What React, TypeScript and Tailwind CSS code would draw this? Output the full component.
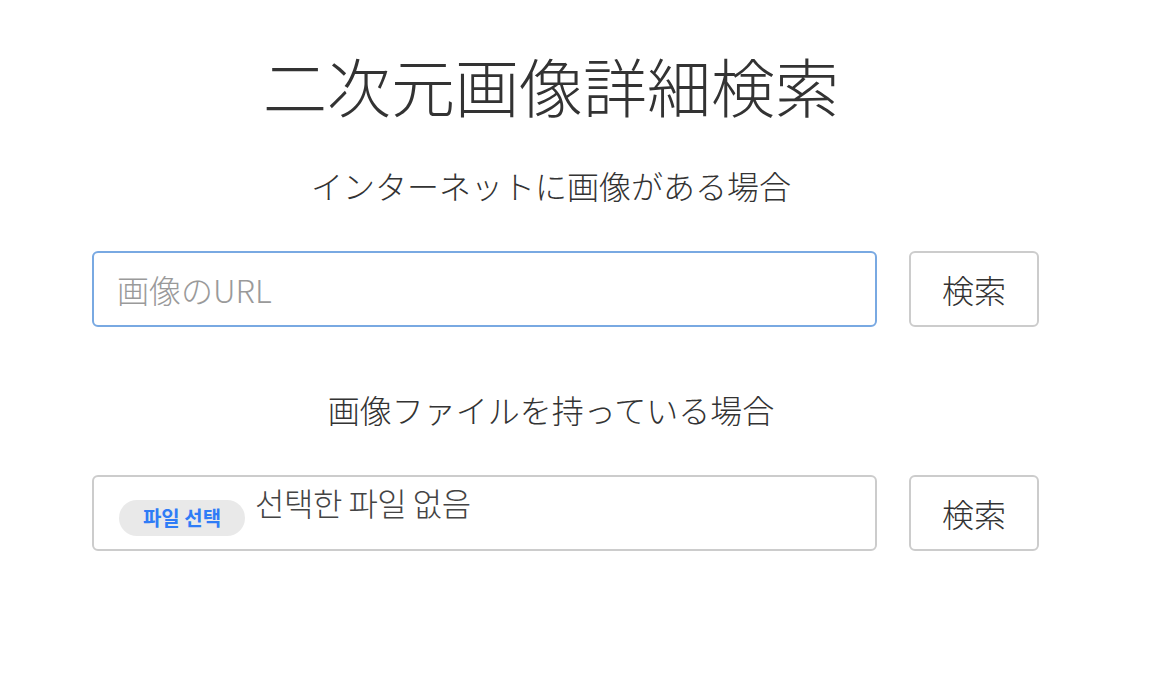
import { useState } from 'react';

const jp = '"Noto Sans CJK JP", "Noto Sans", sans-serif';
const kr = '"Noto Sans CJK KR", "Noto Sans", sans-serif';

export default function App() {
  const [url, setUrl] = useState('');

  return (
    <div className="min-h-screen bg-white text-[#333]" style={{ fontFamily: jp }}>
      <div className="ml-[92px] w-[947px] pt-[46px]">
        {/* Title */}
        <h1 className="w-[918px] text-center text-[64px] leading-[1.2] font-light">二次元画像詳細検索</h1>

        {/* URL search */}
        <h2 className="mt-[42px] w-[918px] text-center text-[32px] leading-10 font-light">
          インターネットに画像がある場合
        </h2>
        <div className="mt-[46px] flex gap-[32px]">
          <input
            type="text"
            value={url}
            onChange={(e) => setUrl(e.target.value)}
            placeholder="画像のURL"
            className="h-[76px] w-[785px] rounded-[6px] border-2 border-[#79a9e2] px-[23px] text-[32px] font-light text-[#333] outline-none placeholder:text-[#9a9a9a]"
          />
          <button className="h-[76px] w-[130px] rounded-[6px] border-2 border-[#cccccc] bg-white text-[32px] font-light text-[#333]">
            検索
          </button>
        </div>

        {/* File search */}
        <h2 className="mt-[62px] w-[918px] text-center text-[32px] leading-10 font-light">
          画像ファイルを持っている場合
        </h2>
        <div className="mt-[46px] flex gap-[32px]">
          <label
            className="flex h-[76px] w-[785px] cursor-pointer items-start rounded-[6px] border-2 border-[#cccccc] pl-[25px]"
            style={{ fontFamily: kr }}
          >
            <span className="mt-[23px] flex h-[36px] w-[126px] items-center justify-center rounded-full bg-[#e9e9e9] text-[20px] font-semibold text-[#2f7cf6]">
              파일 선택
            </span>
            <span className="mt-[5px] ml-[10px] text-[32px] leading-10 font-light tracking-[-0.5px] text-[#444]">
              선택한 파일 없음
            </span>
            <input type="file" className="hidden" />
          </label>
          <button className="h-[76px] w-[130px] rounded-[6px] border-2 border-[#cccccc] bg-white text-[32px] font-light text-[#333]">
            検索
          </button>
        </div>
      </div>
    </div>
  );
}
